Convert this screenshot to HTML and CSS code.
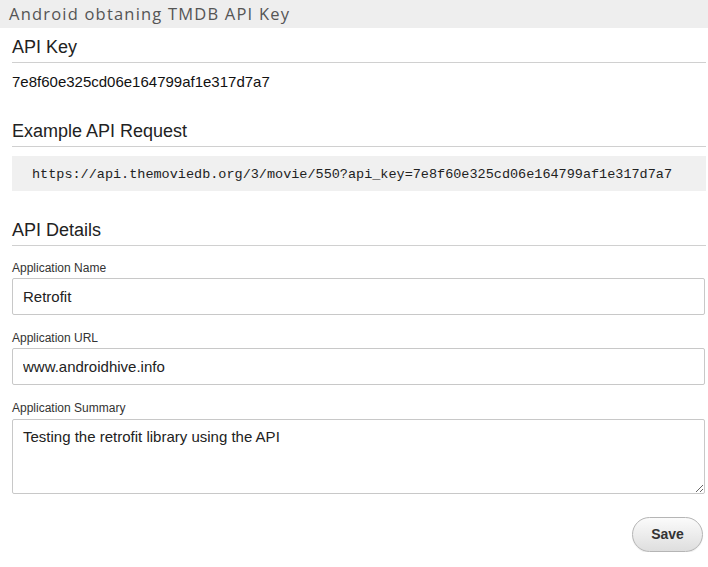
FILE: index.html
```html
<!DOCTYPE html>
<html>
<head>
<meta charset="utf-8">
<link rel="stylesheet" href="styles.css">
</head>
<body>
<div class="titlebar">Android obtaning TMDB API Key</div>
<div class="content">
  <h2 class="heading first">API Key</h2>
  <p class="key">7e8f60e325cd06e164799af1e317d7a7</p>
  <h2 class="heading">Example API Request</h2>
  <pre class="code">https://api.themoviedb.org/3/movie/550?api_key=7e8f60e325cd06e164799af1e317d7a7</pre>
  <h2 class="heading">API Details</h2>
  <form class="form">
    <label class="label">Application Name</label>
    <input class="field" type="text" value="Retrofit">
    <label class="label">Application URL</label>
    <input class="field" type="text" value="www.androidhive.info">
    <label class="label">Application Summary</label>
    <textarea class="field area">Testing the retrofit library using the API</textarea>
    <div class="actions"><button type="button" class="save">Save</button></div>
  </form>
</div>
</body>
</html>
```
FILE: styles.css
```css
html, body {
  margin: 0;
  padding: 0;
  background: #fff;
}
body {
  font-family: "Liberation Sans", Arial, sans-serif;
  color: #222;
}
.titlebar {
  height: 28px;
  line-height: 27px;
  background: #eeeeee;
  padding-left: 9px;
  font-family: "Open Sans", sans-serif;
  font-size: 16.5px;
  letter-spacing: 1.2px;
  color: #555;
}
.content {
  padding: 0 2px 0 12px;
}
.heading {
  margin: 28px 0 0;
  font-size: 18px;
  line-height: 22px;
  font-weight: normal;
  color: #222;
  padding-bottom: 4px;
  border-bottom: 1px solid #d0d0d0;
}
.heading.first {
  margin-top: 8px;
}
.key {
  margin: 9px 0 0;
  font-size: 15px;
  line-height: 20px;
  color: #111;
}
.code {
  margin: 9px 0 0;
  background: #f0f0f0;
  padding: 11px 20px 9px;
  font-family: "Liberation Mono", "Courier New", monospace;
  font-size: 13.5px;
  line-height: 15px;
  color: #222;
}
.form {
  display: flex;
  flex-direction: column;
}
.label {
  margin-top: 16px;
  font-size: 12px;
  line-height: 14px;
  color: #333;
}
.label:first-child {
  margin-top: 15px;
}
.field {
  margin: 3px 0 0;
  box-sizing: border-box;
  height: 37px;
  width: 693px;
  border: 1px solid #c8c8c8;
  border-radius: 2px;
  padding: 0 10px;
  font-family: "Liberation Sans", Arial, sans-serif;
  font-size: 15px;
  color: #222;
  background: #fff;
  outline: none;
}
.area {
  margin-top: 4px;
  height: 75px;
  padding: 8px 10px;
  line-height: 18px;
  resize: vertical;
}
.actions {
  display: flex;
  justify-content: flex-end;
  margin-top: 23px;
  padding-right: 3px;
}
.save {
  width: 71px;
  height: 35px;
  border: 1px solid #b5b5b5;
  border-radius: 18px;
  background: linear-gradient(#fbfbfb, #dedede);
  font-family: "Liberation Sans", Arial, sans-serif;
  font-weight: bold;
  font-size: 14px;
  padding: 0 0 2px;
  color: #333;
  box-shadow: 0 1px 1px rgba(0,0,0,0.08);
}
```
